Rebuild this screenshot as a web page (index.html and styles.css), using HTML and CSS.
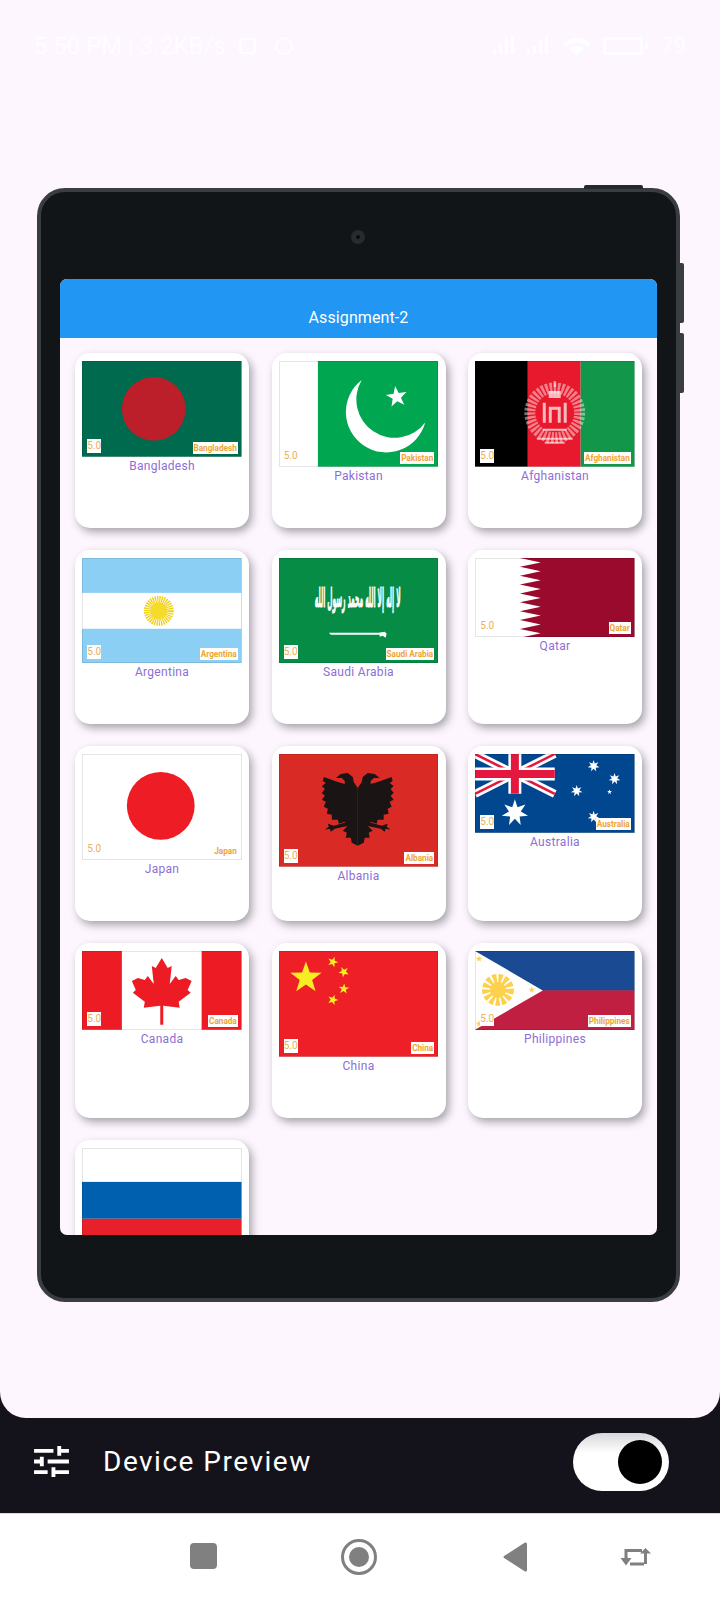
FILE: index.html
```html
<!DOCTYPE html>
<html lang="en">
<head>
<meta charset="UTF-8">
<meta name="viewport" content="width=device-width, initial-scale=1.0">
<title>Device Preview</title>
<link rel="stylesheet" href="styles.css">
</head>
<body>
<svg class="defs" width="0" height="0" aria-hidden="true">
    <defs>
        <polygon id="star5" points="0,-10 2.35,-3.24 9.51,-3.09 3.8,1.24 5.88,8.09 0,4 -5.88,8.09 -3.8,1.24 -9.51,-3.09 -2.35,-3.24"/>
        <polygon id="star7" points="0,-10 1.95,-4.05 7.82,-6.23 4.39,-1 9.75,2.23 3.52,2.81 4.34,9.01 0,4.5 -4.34,9.01 -3.52,2.81 -9.75,2.23 -4.39,-1 -7.82,-6.23 -1.95,-4.05"/>
        <g id="eagle-half">
            <path d="M0 34L4 28 5 23 10 19 17 20 22 24 16 24 13 27 13 30 20 28 34 23 35 27 32 29 36 32 33 35 36 39 33 42 36 46 32 48 34 53 30 55 31 60 26 61 26 66 20 66 19 70 13 68 10 72 15 77 11 79 12 84 7 84 6 89 0 92Z"/>
            <path d="M10 68L24 72 30 70 29 73 33 76 28 75 27 78 23 75 9 72Z"/>
        </g>
    </defs>
</svg>

<div class="sheet">
    <div class="statusbar">
        <span class="status-text">5:50 PM | 3.2KB/s</span>
        <svg class="status-icons-left" width="56" height="20" viewBox="0 0 56 20" fill="none" stroke="#fff" stroke-width="2">
            <rect x="2" y="3" width="15" height="14" rx="3"/>
            <circle cx="46" cy="10" r="8"/>
        </svg>
        <svg class="status-icons-right" width="160" height="24" viewBox="0 0 160 24" fill="#fff">
            <path d="M2 20h3v-5H2zM8 20h3V10H8zM14 20h3V5h-3zM20 20h3V2h-3zM36 20h3v-5h-3zM42 20h3v-8h-3zM48 20h3V7h-3zM54 20h3V2h-3z"/>
            <path d="M72 10c8-8 20-8 28 0l-3 3c-6-6-16-6-22 0zM79 15c4-4 10-4 14 0l-7 7z"/>
            <path d="M112 3h40v18h-40zM115 6v12h34V6zM154 9h3v6h-3z" fill-rule="evenodd"/>
        </svg>
        <span class="status-battery">79</span>
    </div>

    <div class="device">
        <span class="btn btn-top"></span>
        <span class="btn btn-side-a"></span>
        <span class="btn btn-side-b"></span>
        <div class="camera"><span></span></div>

        <div class="screen">
            <div class="appbar">Assignment-2</div>
            <div class="grid">

                <div class="card">
                    <div class="flag">
                        <svg viewBox="0 0 160 96">
                            <rect width="160" height="96" fill="#006a4e"/>
                            <circle cx="72" cy="48" r="32" fill="#bc1e2a"/>
                        </svg>
                        <span class="rate">5.0</span><span class="tag">Bangladesh</span>
                    </div>
                    <p class="name">Bangladesh</p>
                </div>

                <div class="card">
                    <div class="flag">
                        <svg viewBox="0 0 160 106">
                            <rect width="160" height="106" fill="#fff"/>
                            <rect x="39" width="121" height="106" fill="#01a651"/>
                            <path d="M83 19A40.500 40.500 0 1 0 146.700 61.700A38.400 38.400 0 0 1 83 19Z" fill="#fff"/>
                            <use href="#star5" transform="translate(118 36) rotate(-8) scale(1.1)" fill="#fff"/>
                        </svg>
                        <span class="rate">5.0</span><span class="tag">Pakistan</span>
                    </div>
                    <p class="name">Pakistan</p>
                </div>

                <div class="card">
                    <div class="flag">
                        <svg viewBox="0 0 160 106">
                            <rect width="53" height="106" fill="#000"/>
                            <rect x="53" width="53" height="106" fill="#e8192c"/>
                            <rect x="106" width="54" height="106" fill="#12964a"/>
                            <circle cx="80" cy="52" r="25" fill="none" stroke="#fff" stroke-width="11" stroke-dasharray="2.500 1.500" opacity=".45"/>
                            <path d="M80 20v6M70 82h20M62 78h36" stroke="#fff" stroke-width="2" opacity=".6"/>
                            <path d="M68 42h3v20h-3zM89 42h3v20h-3zM74 46h12v16h-3V49h-6v13h-3zM74 30h12v7H74zM68 68h24v2H68z" fill="#fff" opacity=".7"/>
                        </svg>
                        <span class="rate">5.0</span><span class="tag">Afghanistan</span>
                    </div>
                    <p class="name">Afghanistan</p>
                </div>

                <div class="card">
                    <div class="flag">
                        <svg viewBox="0 0 160 106">
                            <rect width="160" height="106" fill="#8ccff5"/>
                            <rect y="35" width="160" height="36" fill="#fff"/>
                            <circle cx="77" cy="53" r="11" fill="none" stroke="#f0cf1a" stroke-width="8" stroke-dasharray="1.200 .8"/>
                            <circle cx="77" cy="53" r="8.500" fill="#f6dc2a"/>
                        </svg>
                        <span class="rate">5.0</span><span class="tag">Argentina</span>
                    </div>
                    <p class="name">Argentina</p>
                </div>

                <div class="card">
                    <div class="flag">
                        <svg viewBox="0 0 160 106">
                            <rect width="160" height="106" fill="#078c46"/>
                            <text class="shahada" text-anchor="middle" transform="translate(79 49) scale(1 4.300)">لا إله إلا الله محمد رسول الله</text>
                            <path d="M50 75h50l6-1 2 2-1 4-3-2-3 1v-2H52z" fill="#fff"/>
                        </svg>
                        <span class="rate">5.0</span><span class="tag">Saudi Arabia</span>
                    </div>
                    <p class="name">Saudi Arabia</p>
                </div>

                <div class="card">
                    <div class="flag">
                        <svg viewBox="0 0 160 80">
                            <rect width="160" height="80" fill="#fff"/>
                            <path d="M45 0H160V80H45L66 75.600 45 71.100 66 66.700 45 62.200 66 57.800 45 53.300 66 48.900 45 44.400 66 40 45 35.600 66 31.100 45 26.700 66 22.200 45 17.800 66 13.300 45 8.900 66 4.400Z" fill="#990a2c"/>
                        </svg>
                        <span class="rate">5.0</span><span class="tag">Qatar</span>
                    </div>
                    <p class="name">Qatar</p>
                </div>

                <div class="card">
                    <div class="flag">
                        <svg viewBox="0 0 160 106">
                            <rect width="160" height="106" fill="#fff"/>
                            <circle cx="79" cy="52" r="34" fill="#ee1c25"/>
                        </svg>
                        <span class="rate">5.0</span><span class="tag">Japan</span>
                    </div>
                    <p class="name">Japan</p>
                </div>

                <div class="card">
                    <div class="flag">
                        <svg viewBox="0 0 160 113">
                            <rect width="160" height="113" fill="#d92a26"/>
                            <g transform="translate(79 0)" fill="#1a1414">
                                <use href="#eagle-half"/>
                                <use href="#eagle-half" transform="scale(-1 1)"/>
                            </g>
                        </svg>
                        <span class="rate">5.0</span><span class="tag">Albania</span>
                    </div>
                    <p class="name">Albania</p>
                </div>

                <div class="card">
                    <div class="flag">
                        <svg viewBox="0 0 160 79">
                            <rect width="160" height="79" fill="#01478f"/>
                            <path d="M0 0L80 40M80 0L0 40" stroke="#fff" stroke-width="8"/>
                            <path d="M0 0L80 40M80 0L0 40" stroke="#e4173e" stroke-width="2.500"/>
                            <path d="M40 0V40M0 20H80" stroke="#fff" stroke-width="13"/>
                            <path d="M40 0V40M0 20H80" stroke="#e4173e" stroke-width="8"/>
                            <g fill="#fff">
                                <use href="#star7" transform="translate(40 59) scale(1.350)"/>
                                <use href="#star7" transform="translate(119 12) scale(.6)"/>
                                <use href="#star7" transform="translate(140 25) scale(.6)"/>
                                <use href="#star7" transform="translate(102 37) scale(.6)"/>
                                <use href="#star7" transform="translate(119 63) scale(.6)"/>
                                <use href="#star5" transform="translate(135 38) scale(.25)"/>
                            </g>
                        </svg>
                        <span class="rate">5.0</span><span class="tag">Australia</span>
                    </div>
                    <p class="name">Australia</p>
                </div>

                <div class="card">
                    <div class="flag">
                        <svg viewBox="0 0 160 79">
                            <rect width="160" height="79" fill="#fff"/>
                            <rect width="40" height="79" fill="#ed1c24"/>
                            <rect x="120" width="40" height="79" fill="#ed1c24"/>
                            <path d="M80 7L86 17 90 15 88 33 94 25 97 29 104 27 110 30 106 39 109 42 97 51 98 57 81.500 55V74H78.500V55L62 57 63 51 51 42 54 39 50 30 56 27 63 29 66 25 72 33 70 15 74 17Z" fill="#ed1c24"/>
                        </svg>
                        <span class="rate">5.0</span><span class="tag">Canada</span>
                    </div>
                    <p class="name">Canada</p>
                </div>

                <div class="card">
                    <div class="flag">
                        <svg viewBox="0 0 160 106">
                            <rect width="160" height="106" fill="#ee1f27"/>
                            <g fill="#f8ec22">
                                <use href="#star5" transform="translate(27 27) scale(1.650)"/>
                                <use href="#star5" transform="translate(54 11) rotate(20) scale(.55)"/>
                                <use href="#star5" transform="translate(65 21) rotate(45) scale(.55)"/>
                                <use href="#star5" transform="translate(65 38) rotate(5) scale(.55)"/>
                                <use href="#star5" transform="translate(54 49) rotate(20) scale(.55)"/>
                            </g>
                        </svg>
                        <span class="rate">5.0</span><span class="tag">China</span>
                    </div>
                    <p class="name">China</p>
                </div>

                <div class="card">
                    <div class="flag">
                        <svg viewBox="0 0 160 79">
                            <rect width="160" height="40" fill="#1a4b92"/>
                            <rect y="39.500" width="160" height="40" fill="#c11f42"/>
                            <path d="M0 0L68 39.500 0 79Z" fill="#fff"/>
                            <circle cx="23" cy="39" r="11" fill="none" stroke="#fdd14b" stroke-width="10" stroke-dasharray="3.500 1.700"/>
                            <circle cx="23" cy="39" r="8" fill="#fdd14b"/>
                            <g fill="#fdd14b">
                                <use href="#star5" transform="translate(4 8) scale(.35)"/>
                                <use href="#star5" transform="translate(57 39) scale(.35)"/>
                                <use href="#star5" transform="translate(4 73) scale(.35)"/>
                            </g>
                        </svg>
                        <span class="rate">5.0</span><span class="tag">Philippines</span>
                    </div>
                    <p class="name">Philippines</p>
                </div>

                <div class="card">
                    <div class="flag">
                        <svg viewBox="0 0 160 106">
                            <rect width="160" height="34" fill="#fff"/>
                            <rect y="34" width="160" height="37" fill="#0060b0"/>
                            <rect y="71" width="160" height="35" fill="#e8202a"/>
                        </svg>
                    </div>
                </div>

            </div>
        </div>
    </div>
</div>

<div class="toolbar">
    <svg class="tune" width="35" height="31" viewBox="0 0 36 32" fill="#fff">
        <path d="M0 3h20v4H0zM24 0h4v3h8v4h-8v3h-4zM0 14h6v-3h4v10H6v-3H0zM14 14h22v4H14zM0 25h14v4H0zM18 22h4v3h14v4H22v3h-4z"/>
    </svg>
    <span class="toolbar-title">Device Preview</span>
    <div class="toggle"><span></span></div>
</div>

<div class="navbar">
    <span class="nav-square"></span>
    <span class="nav-home"><span></span></span>
    <svg class="nav-back" width="24" height="30" viewBox="0 0 24 30"><path d="M22 0.500Q24 0 24 2V28Q24 30 22 29.500L1 16Q0 15 1 14Z" fill="#808080"/></svg>
    <svg class="nav-swap" width="31" height="18" viewBox="0 0 31 18" fill="none" stroke="#808080" stroke-width="3">
        <path d="M6 14V2.500H22M24 16H10M25.500 16V4"/>
        <path d="M0.500 10h11L6 17.500zM20 5.500L25.500 0 31 5.500z" fill="#808080" stroke="none"/>
    </svg>
</div>
</body>
</html>
```

FILE: styles.css
```css
*{margin:0;padding:0;box-sizing:border-box}
body{width:720px;height:1600px;background:#14121a;font-family:Roboto,"Liberation Sans",sans-serif;overflow:hidden}
.defs{position:absolute}

.sheet{height:1418px;background:#fdf6ff;border-radius:0 0 26px 26px;padding-top:34px}
.statusbar{height:154px;display:flex;align-items:flex-start;padding:0 34px;color:#fff}
.status-text{font-size:24px;line-height:24px;opacity:.8}
.status-icons-left{margin:2px 0 0 12px;opacity:.8}
.status-icons-right{margin:0 10px 0 auto;opacity:.8}
.status-battery{font-size:22px;line-height:24px;opacity:.8}

.device{position:relative;width:643px;height:1114px;margin-left:37px;background:#121517;border:4px solid #3a3d40;border-radius:28px;padding:87px 19px 0}
.btn{position:absolute;background:#26292b;border-radius:2px 2px 0 0}
.btn-top{top:-7px;right:33px;width:59px;height:4px}
.btn-side-a,.btn-side-b{right:-8px;width:4px;border-radius:0 2px 2px 0;background:#3a3d40}
.btn-side-a{top:71px;height:60px}
.btn-side-b{top:141px;height:60px}
.camera{position:absolute;top:38px;left:310px;width:14px;height:14px;border-radius:50%;background:#272a2e;display:flex;align-items:center;justify-content:center}
.camera span{width:4px;height:4px;border-radius:50%;background:#0a0b0c}

.screen{width:597px;height:956px;background:#fdf6ff;border-radius:7px;overflow:hidden}
.appbar{height:59px;background:#2196f3;color:#fff;font-size:16px;letter-spacing:.1px;text-align:center;padding-top:29px;line-height:20px}
.grid{display:grid;grid-template-columns:repeat(3,174px);grid-auto-rows:174.500px;gap:22.200px 22.500px;padding:15px}
.card{background:#fff;border-radius:15px;box-shadow:3px 4px 8px rgba(0,0,0,.34);padding-top:8px;display:flex;flex-direction:column;align-items:center}
.flag{position:relative;width:159.500px;font-size:0;outline:1px solid rgba(0,0,0,.1);outline-offset:-1px}
.flag svg{display:block;width:100%;height:auto}
.rate{position:absolute;left:5px;bottom:4px;height:14px;width:14px;background:#fff;color:#e9b15c;font-size:10px;line-height:14px;text-align:center}
.tag{position:absolute;right:4px;bottom:3px;height:12px;padding:0 1px;background:#fff;color:#eda436;font-size:8.200px;font-weight:700;line-height:12px}
.name{font-size:12px;line-height:17px;padding-top:1px;color:#8b6fd4;letter-spacing:.3px}
.shahada{font-family:"DejaVu Sans",sans-serif;font-size:6px;font-weight:700;fill:#fff;stroke:#fff;stroke-width:.2px}

.toolbar{height:95px;display:flex;align-items:center;padding:0 51px 8px 34px}
.tune{margin-right:34px}
.toolbar-title{color:#fff;font-size:28px;letter-spacing:1.500px}
.toggle{margin-left:auto;width:96px;height:58px;border-radius:29px;background:linear-gradient(#d8d8d8,#fff 35%);display:flex;align-items:center;justify-content:flex-end;padding-right:7px}
.toggle span{width:44px;height:44px;border-radius:50%;background:#000}

.navbar{position:relative;height:87px;background:#fff;border-top:1px solid #ddd}
.nav-square{position:absolute;left:190px;top:29px;width:27px;height:26px;border-radius:4px;background:#808080}
.nav-home{position:absolute;left:341px;top:25px;width:36px;height:36px;border-radius:50%;border:3px solid #808080;display:flex;align-items:center;justify-content:center}
.nav-home span{width:20px;height:20px;border-radius:50%;background:#808080}
.nav-back{position:absolute;left:503px;top:28px}
.nav-swap{position:absolute;left:620px;top:34px}
```
